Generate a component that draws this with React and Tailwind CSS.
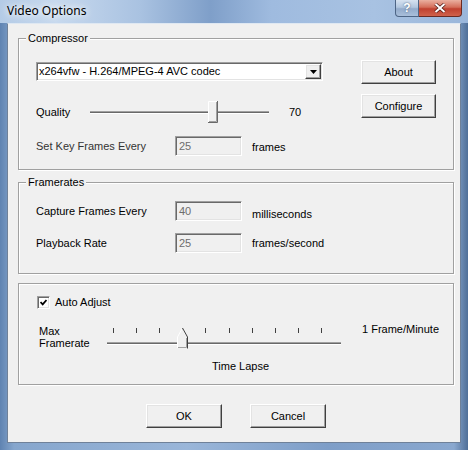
import React from 'react'

const raised =
  'bg-[#f0f0f0] border border-t-white border-l-white border-r-[#404040] border-b-[#404040] shadow-[inset_-1px_-1px_0_#a0a0a0,inset_1px_1px_0_#e3e3e3]'
const sunken =
  'border border-t-[#a0a0a0] border-l-[#a0a0a0] border-r-white border-b-white shadow-[inset_1px_1px_0_#696969,inset_-1px_-1px_0_#e3e3e3]'
const group =
  'relative border border-[#a0a0a0] shadow-[inset_1px_1px_0_#fff,1px_1px_0_#fff]'

function GroupLabel({ children }) {
  return (
    <span className="absolute left-[7px] top-[-7px] bg-[#f0f0f0] px-[2px] leading-[12px]">
      {children}
    </span>
  )
}

function Button({ children, className = '' }) {
  return (
    <div className={`${raised} h-[24px] w-[75px] flex items-center justify-center ${className}`}>
      {children}
    </div>
  )
}

function DisabledEdit({ value }) {
  return (
    <div className={`${sunken} w-[67px] h-[20px] bg-[#f0f0f0] text-[#6d6d6d] pl-[3px] flex items-center`}>
      {value}
    </div>
  )
}

function QualitySlider() {
  return (
    <svg width="180" height="24" className="block">
      <rect x="0" y="11" width="179" height="1" fill="#a0a0a0" />
      <rect x="0" y="12" width="179" height="1" fill="#696969" />
      <rect x="0" y="13" width="179" height="1" fill="#ffffff" />
      <rect x="118" y="1" width="10" height="22" fill="#f0f0f0" />
      <path d="M118.5 22.5 V1.5 H127.5" stroke="#ffffff" fill="none" />
      <path d="M127.5 1 V22.5 H118" stroke="#696969" fill="none" />
      <path d="M126.5 2 V21.5 H119" stroke="#a0a0a0" fill="none" />
    </svg>
  )
}

function LapseSlider() {
  const ticks = Array.from({ length: 11 }, (_, i) => Math.round(6 + i * 23.1))
  return (
    <svg width="234" height="26" className="block">
      {ticks.map((x) => (
        <rect key={x} x={x} y="3" width="1" height="5" fill="#404040" />
      ))}
      <rect x="0" y="17" width="234" height="1" fill="#a0a0a0" />
      <rect x="0" y="18" width="234" height="1" fill="#696969" />
      <rect x="0" y="19" width="234" height="1" fill="#ffffff" />
      <polygon points="70,12 75,3 80,12 80,23 70,23" fill="#f0f0f0" />
      <path d="M70.5 23 V12 L75.5 3" stroke="#ffffff" fill="none" />
      <path d="M75.5 3 L80.5 12 V23.5" stroke="#404040" fill="none" />
      <path d="M79.5 13 V22.5 H71" stroke="#a0a0a0" fill="none" />
    </svg>
  )
}

export default function App() {
  return (
    <div className="w-[468px] h-[450px] flex flex-col overflow-hidden bg-[linear-gradient(90deg,#5f83b1_0%,#86a6cd_3%,#9ab6d9_40%,#7e9ec8_70%,#8aa8cf_97%,#4f6f98_100%)] font-['Liberation_Sans',Arial,sans-serif] text-[11px] text-black">
      {/* title bar */}
      <div className="h-[23px] flex items-start bg-[linear-gradient(90deg,#b4cbe6_0%,#c7d9ee_12%,#a9c2e1_30%,#7f9fc9_45%,#9fbbdf_58%,#a8c2e2_80%,#9ab6da_100%)]">
        <div className="pl-[7px] pt-[3px] font-['Noto_Sans',sans-serif] text-[12px] leading-[16px] [text-shadow:0_0_6px_#fff,0_0_10px_#fff]">
          Video Options
        </div>
        <div className="ml-auto mr-[6px] flex">
          <div className="w-[24px] h-[17px] rounded-bl-[4px] border border-t-0 border-[#4d6585] bg-[linear-gradient(180deg,#d6e2f0_0%,#b3c7df_45%,#93abcb_55%,#a9bfdb_100%)] flex items-center justify-center text-white font-bold text-[12px] leading-none [text-shadow:0_0_2px_#3b5270]">
            ?
          </div>
          <div className="w-[43px] h-[17px] rounded-br-[4px] border border-t-0 border-l-0 border-[#6a2a22] bg-[linear-gradient(180deg,#eab0a0_0%,#d46e5a_45%,#c0412f_55%,#d0624c_100%)] flex items-center justify-center">
            <svg width="12" height="10" viewBox="0 0 12 10">
              <path d="M1.5 1 L10.5 9 M10.5 1 L1.5 9" stroke="#4a1510" strokeWidth="3.4" />
              <path d="M1.5 1 L10.5 9 M10.5 1 L1.5 9" stroke="#ffffff" strokeWidth="2" />
            </svg>
          </div>
        </div>
      </div>

      <div className="flex-1 flex px-[7px]">
        {/* client area */}
        <div className="w-[454px] h-[420px] bg-[#f0f0f0] border border-[#6f8199] border-t-[#dfe8f2] pl-[10px] pt-[14px] flex flex-col">
          {/* Compressor */}
          <div className={`${group} w-[436px] h-[132px] flex pt-[22px] pl-[17px] pr-[17px]`}>
            <GroupLabel>Compressor</GroupLabel>
            <div className="flex flex-col mt-[1px]">
              <div className={`${sunken} w-[287px] h-[19px] bg-white flex items-center pl-[2px]`}>
                <span className="flex-1">x264vfw - H.264/MPEG-4 AVC codec</span>
                <div className={`${raised} w-[16px] h-[15px] mr-[1px] flex items-center justify-center`}>
                  <svg width="7" height="4" viewBox="0 0 7 4">
                    <path d="M0 0 H7 L3.5 4 Z" fill="#000" />
                  </svg>
                </div>
              </div>
              <div className="mt-[19px] h-[24px] flex items-center">
                <span className="w-[54px]">Quality</span>
                <QualitySlider />
                <span className="ml-[19px]">70</span>
              </div>
              <div className="mt-[12px] h-[20px] flex items-center">
                <span className="w-[139px] text-[#333]">Set Key Frames Every</span>
                <DisabledEdit value="25" />
                <span className="ml-[10px] mt-[2px]">frames</span>
              </div>
            </div>
            <div className="ml-auto flex flex-col gap-[10px] mt-[-1px]">
              <Button>About</Button>
              <Button>Configure</Button>
            </div>
          </div>

          {/* Framerates */}
          <div className={`${group} w-[436px] h-[92px] mt-[12px] pt-[18px] pl-[17px] flex flex-col`}>
            <GroupLabel>Framerates</GroupLabel>
            <div className="h-[20px] flex items-center">
              <span className="w-[139px]">Capture Frames Every</span>
              <DisabledEdit value="40" />
              <span className="ml-[10px] mt-[6px]">milliseconds</span>
            </div>
            <div className="mt-[12px] h-[20px] flex items-center">
              <span className="w-[139px]">Playback Rate</span>
              <DisabledEdit value="25" />
              <span className="ml-[10px] mt-[1px]">frames/second</span>
            </div>
          </div>

          {/* Auto adjust */}
          <div className={`${group} w-[436px] h-[102px] mt-[9px] pt-[12px] flex flex-col`}>
            <div className="pl-[18px] h-[13px] flex items-center">
              <div className={`${sunken} w-[13px] h-[13px] bg-white flex items-center justify-center`}>
                <svg width="7" height="7" viewBox="0 0 7 7">
                  <path d="M0.5 3 L2.7 5.3 L6.5 1" stroke="#000" strokeWidth="1.8" fill="none" />
                </svg>
              </div>
              <span className="ml-[5px]">Auto Adjust</span>
            </div>
            <div className="mt-[16px] pl-[20px] flex items-start">
              <div className="w-[68px] leading-[12px]">
                Max
                <br />
                Framerate
              </div>
              <LapseSlider />
              <span className="ml-[21px] mt-[-2px] leading-[12px]">1 Frame/Minute</span>
            </div>
            <div className="mt-[9px] pl-[193px] leading-[12px]">Time Lapse</div>
          </div>

          <div className="mt-[19px] w-[436px] flex justify-center gap-[28px]">
            <Button className="w-[76px]">OK</Button>
            <Button className="w-[76px]">Cancel</Button>
          </div>
        </div>
      </div>
      <div className="h-[7px]" />
    </div>
  )
}
